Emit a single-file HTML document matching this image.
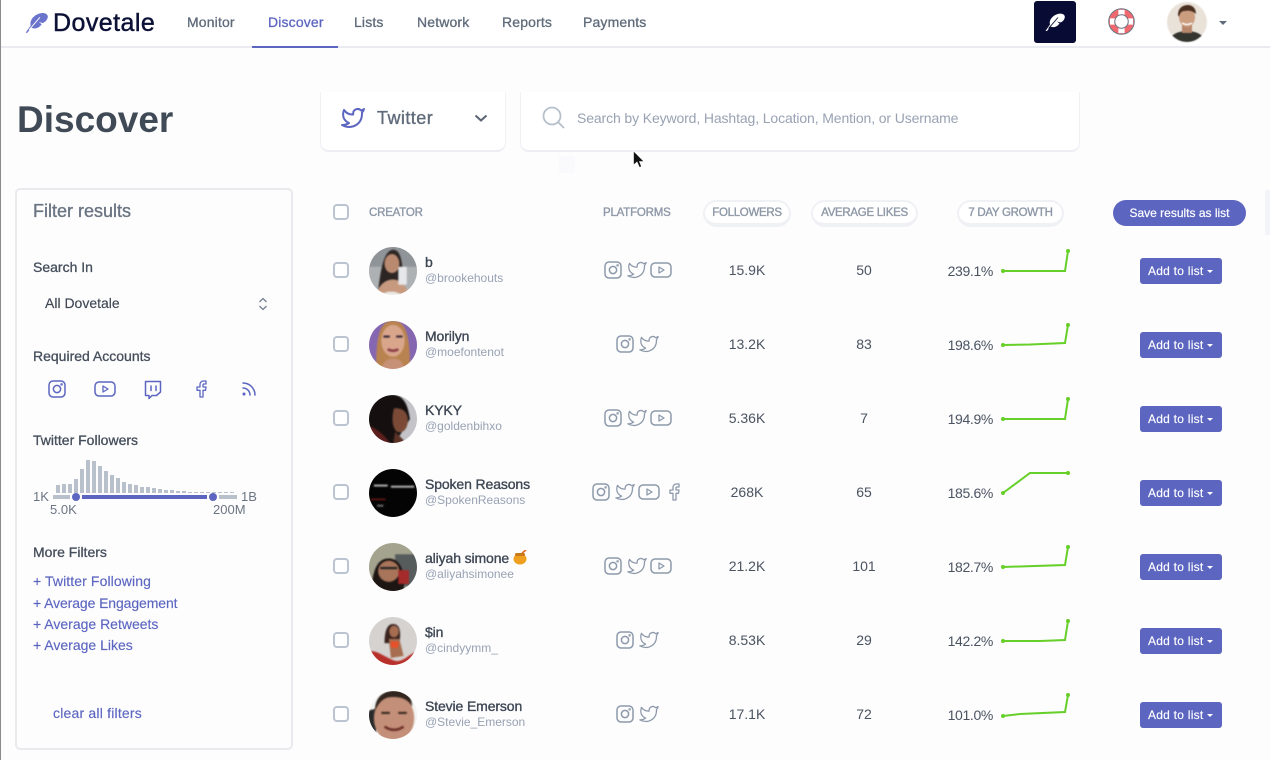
<!DOCTYPE html>
<html lang="en"><head><meta charset="utf-8"><title>Discover</title>
<style>
*{box-sizing:border-box}
html,body{margin:0;padding:0}
body{width:1270px;height:760px;overflow:hidden;background:#fdfdfe;font-family:"Liberation Sans",sans-serif;position:relative}
.a{position:absolute;white-space:nowrap}
.nav{top:14px;line-height:16px;font-size:14px;letter-spacing:.15px;color:#5f6b7a;-webkit-text-stroke:.3px #5f6b7a}
.lab{left:33px;font-size:14px;line-height:16px;color:#454e5b;-webkit-text-stroke:.3px #454e5b}
.lnk{left:33px;font-size:14px;line-height:16px;color:#5c66c0;-webkit-text-stroke:.15px #5c66c0}
.th{top:205px;line-height:16px;font-size:11.5px;letter-spacing:-.2px;color:#8d97a6;-webkit-text-stroke:.35px #8d97a6}
.pill{top:200px;height:27px;background:#fff;border:2px solid #f0f1f4;border-bottom-width:4px;border-radius:14px;text-align:center;line-height:22px;font-size:11.5px;letter-spacing:-.3px;color:#8d97a6;-webkit-text-stroke:.35px #8d97a6}
.row{position:absolute;left:0;width:1270px;height:74px}
.cb{position:absolute;left:333px;top:29px;width:16px;height:16px;border:2px solid #bcc4d2;border-radius:4px;background:#fff}
.hcb{left:333px;top:204px;width:16px;height:16px;border:2px solid #bcc4d2;border-radius:4px;background:#fff}
.av{position:absolute;left:369px;top:14px;width:48px;height:48px;border-radius:50%;overflow:hidden}
.av svg{display:block;filter:blur(.8px);transform:scale(1.06)}
.n{position:absolute;left:425px;top:21px;line-height:16px;font-size:14px;letter-spacing:-.12px;color:#3e4754;-webkit-text-stroke:.35px #3e4754;white-space:nowrap}
.h{position:absolute;left:425px;top:37px;line-height:16px;font-size:12px;color:#98a2b3;white-space:nowrap}
.fo,.li{position:absolute;top:29px;line-height:16px;font-size:14px;color:#4a5360;text-align:center;width:80px}
.fo{left:707px}.li{left:824px}
.gr{position:absolute;left:933px;width:60px;top:30px;line-height:16px;font-size:14px;letter-spacing:-.35px;color:#4a5360;text-align:right}
.sp{position:absolute;left:1000px;top:0}
.btn{position:absolute;left:1140px;top:25px;width:82px;height:26px;background:#5c66c0;border-radius:3px;color:#fff;font-size:12px;letter-spacing:.25px;line-height:26px;padding-left:8px;white-space:nowrap;-webkit-text-stroke:.15px #fff}
.btn i{position:absolute;left:67px;top:12px;width:0;height:0;border:3.5px solid transparent;border-top:3.5px solid #fff;border-bottom:0}
.ic{position:absolute;fill:none;stroke:#8d99aa;stroke-width:1.5;stroke-linecap:round;stroke-linejoin:round}
.bl{stroke:#5c66c0}
.hb{position:absolute;background:#b8c0cb;width:4px;bottom:267px}
</style></head>
<body>
<svg width="0" height="0" style="position:absolute"><defs>
<symbol id="ig" viewBox="0 0 18 18"><rect x="1" y="1" width="16" height="16" rx="4"/><circle cx="9" cy="9" r="3.6"/><circle cx="13.6" cy="4.4" r=".5"/></symbol>
<symbol id="tw" viewBox="0 0 24 24"><path d="M23 3a10.9 10.9 0 0 1-3 1.53 4.48 4.48 0 0 0-7.86 3v1A10.66 10.66 0 0 1 3 4s-4 9 5 13a11.64 11.64 0 0 1-7 2c9 5 20 0 20-11.5a4.5 4.5 0 0 0-.08-.83A7.72 7.72 0 0 0 23 3z"/></symbol>
<symbol id="yt" viewBox="0 0 22 16"><rect x="1" y="1" width="20" height="14" rx="4"/><path d="M9 5l5 3-5 3z" stroke-width="1.3"/></symbol>
<symbol id="fb" viewBox="0 0 12 18"><path d="M11 1H8.600A3.400 3.400 0 0 0 5 4.500V7H2v3.300h3V17h3v-6.700h2.500L11 7H8V4.800c0-.5.300-.8.800-.8H11z" stroke-width="1.300"/></symbol>
<symbol id="th" viewBox="0 0 18 20"><path d="M1.500 1.500h15v10.500l-4 3.500H8l-3 3v-3H1.500z"/><path d="M7 6v4.500M12 6v4.500"/></symbol>
<symbol id="rs" viewBox="0 0 16 16"><path d="M2 7a7 7 0 0 1 7 7M2 2a12 12 0 0 1 12 12"/><circle cx="3" cy="13" r=".8"/></symbol>
<symbol id="fe" viewBox="0 0 20 18"><path d="M.5 18L5 11.500C3.500 6.500 9 1.500 14 .8C17 .3 19.500 1.500 19.800 3.500C20 6 18 8.500 15.500 9.500L12 8.500L14.500 10.500C12 14 8.500 15 5.500 13.500L2 18Z"/></symbol>
</defs></svg>

<div class="a" style="left:0;top:0;width:1px;height:760px;background:#8b8b8b"></div>
<div class="a" style="left:1px;top:0;width:1269px;height:48px;background:#fff;border-bottom:2px solid #e9ebf1"></div>
<div class="a" style="left:252px;top:46px;width:86px;height:2px;background:#5c66c0"></div>

<svg class="a" style="left:25px;top:12px" width="23" height="21" viewBox="0 0 20 18" fill="#6a74cc"><use href="#fe"/><path d="M3.500 15.500L13 4.500" stroke="#fff" stroke-width=".8"/></svg>
<div class="a" style="left:53px;top:8px;line-height:30px;font-size:25px;letter-spacing:.45px;color:#0b1035;-webkit-text-stroke:.45px #0b1035">Dovetale</div>
<div class="a nav" style="left:187px">Monitor</div>
<div class="a nav" style="left:268px;color:#5c66c0;-webkit-text-stroke-color:#5c66c0">Discover</div>
<div class="a nav" style="left:354px">Lists</div>
<div class="a nav" style="left:417px">Network</div>
<div class="a nav" style="left:502px">Reports</div>
<div class="a nav" style="left:583px">Payments</div>

<div class="a" style="left:1034px;top:1px;width:42px;height:42px;background:#080b33;border-radius:3px"></div>
<svg class="a" style="left:1045px;top:13px" width="20" height="18" viewBox="0 0 20 18" fill="#fff"><use href="#fe"/><path d="M3.500 15.500L13 4.500" stroke="#080b33" stroke-width=".9"/></svg>
<svg class="a" style="left:1108px;top:8px" width="27" height="27" viewBox="0 0 28 28"><circle cx="14" cy="14" r="10" fill="none" stroke="#f1696f" stroke-width="6"/><path d="M14 2v8M14 18v8M2 14h8M18 14h8" stroke="#fff" stroke-width="6.500"/><circle cx="14" cy="14" r="13.200" fill="none" stroke="#707883" stroke-width="1.100"/><circle cx="14" cy="14" r="7" fill="none" stroke="#707883" stroke-width="1.100"/></svg>
<svg class="a" style="left:1167px;top:2px;filter:blur(.5px)" width="40" height="40" viewBox="0 0 40 40"><defs><clipPath id="c0"><circle cx="20" cy="20" r="20"/></clipPath></defs><g clip-path="url(#c0)"><rect width="40" height="40" fill="#e9e2d9"/><path d="M2 40C3 32 12 29 20 29S37 32 38 40Z" fill="#34352f"/><rect x="15" y="20" width="10" height="11" fill="#b8876b"/><ellipse cx="20" cy="15" rx="8" ry="10" fill="#cc9e80"/><path d="M11 13C11 5 17 3 21 3S29 6 29 12C26 9 22 8 18 9C15 9 13 10 12 15Z" fill="#4a3020"/><path d="M15 21q5 3 10 0" stroke="#fff" stroke-width="1.500" fill="none"/></g></svg>
<div class="a" style="left:1219px;top:21px;width:0;height:0;border:4px solid transparent;border-top:4px solid #5f6b7a;border-bottom:0"></div>

<div class="a" style="left:17px;top:98px;line-height:44px;font-size:37px;font-weight:bold;color:#3f4a56">Discover</div>

<div class="a" style="left:320px;top:92px;width:186px;height:60px;background:#fff;border:1px solid #f0f1f5;border-top:0;border-bottom:2px solid #eceef3;border-radius:0 0 9px 9px"></div>
<svg class="ic bl" style="left:341px;top:106px;stroke-width:2" width="24" height="24" viewBox="0 0 24 24"><use href="#tw"/></svg>
<div class="a" style="left:377px;top:108px;line-height:20px;font-size:18px;letter-spacing:.45px;color:#5f6b7a;-webkit-text-stroke:.35px #5f6b7a">Twitter</div>
<svg class="a" style="left:474px;top:114px" width="14" height="9" viewBox="0 0 14 9"><path d="M1.500 1.500L7 6.500L12.500 1.500" fill="none" stroke="#5a6472" stroke-width="2"/></svg>

<div class="a" style="left:520px;top:92px;width:560px;height:60px;background:#fff;border:1px solid #f0f1f5;border-top:0;border-bottom:2px solid #eceef3;border-radius:0 0 9px 9px"></div>
<svg class="a" style="left:542px;top:106px" width="23" height="23" viewBox="0 0 23 23"><circle cx="10" cy="10" r="8.500" fill="none" stroke="#b6bfcb" stroke-width="1.800"/><path d="M16 16l6 6" stroke="#b6bfcb" stroke-width="1.800"/></svg>
<div class="a" style="left:577px;top:110px;line-height:16px;font-size:14px;letter-spacing:-.12px;color:#98a2b3">Search by Keyword, Hashtag, Location, Mention, or Username</div>

<div class="a" style="left:559px;top:156px;width:16px;height:17px;background:#fafafd"></div>
<svg class="a" style="left:632px;top:150px" width="13" height="19" viewBox="0 0 13 19"><path d="M1.500 1V15L5 12L7.500 17.500L9.500 16.500L7.500 11.500H12Z" fill="#111" stroke="#fff" stroke-width=".6"/></svg>

<!-- sidebar -->
<div class="a" style="left:15px;top:188px;width:278px;height:562px;border:2px solid #e8eaee;border-radius:5px;background:#fdfdfe"></div>
<div class="a" style="left:33px;top:201px;line-height:20px;font-size:18px;color:#6b7583;-webkit-text-stroke:.35px #6b7583">Filter results</div>
<div class="a lab" style="top:259px">Search In</div>
<div class="a" style="left:45px;top:295px;line-height:16px;font-size:14px;color:#3e4754;-webkit-text-stroke:.15px #3e4754">All Dovetale</div>
<svg class="a" style="left:258px;top:297px" width="10" height="14" viewBox="0 0 10 14"><path d="M1.500 5L5 1.500L8.500 5M1.500 9L5 12.500L8.500 9" fill="none" stroke="#77808d" stroke-width="1.300"/></svg>
<div class="a lab" style="top:348px">Required Accounts</div>
<svg class="ic bl" style="left:48px;top:380px" width="18" height="18"><use href="#ig"/></svg>
<svg class="ic bl" style="left:94px;top:381px" width="22" height="16"><use href="#yt"/></svg>
<svg class="ic bl" style="left:144px;top:380px" width="18" height="20"><use href="#th"/></svg>
<svg class="ic bl" style="left:195px;top:380px" width="12" height="18"><use href="#fb"/></svg>
<svg class="ic bl" style="left:241px;top:381px" width="16" height="16"><use href="#rs"/></svg>
<div class="a lab" style="top:432px">Twitter Followers</div>

<div class="hb" style="left:56px;height:8px"></div><div class="hb" style="left:62px;height:9px"></div><div class="hb" style="left:68px;height:9px"></div><div class="hb" style="left:74px;height:14px"></div><div class="hb" style="left:80px;height:24px"></div><div class="hb" style="left:86px;height:33px"></div><div class="hb" style="left:92px;height:32px"></div><div class="hb" style="left:98px;height:27px"></div><div class="hb" style="left:104px;height:22px"></div><div class="hb" style="left:110px;height:18px"></div><div class="hb" style="left:116px;height:15px"></div><div class="hb" style="left:122px;height:11px"></div><div class="hb" style="left:128px;height:9px"></div><div class="hb" style="left:134px;height:8px"></div><div class="hb" style="left:140px;height:6px"></div><div class="hb" style="left:146px;height:6px"></div><div class="hb" style="left:152px;height:5px"></div><div class="hb" style="left:158px;height:4px"></div><div class="hb" style="left:164px;height:3px"></div><div class="hb" style="left:170px;height:3px"></div><div class="hb" style="left:176px;height:2px"></div><div class="hb" style="left:182px;height:2px"></div><div class="hb" style="left:188px;height:1px"></div><div class="hb" style="left:194px;height:1px"></div><div class="hb" style="left:200px;height:1px"></div><div class="hb" style="left:206px;height:1px"></div><div class="hb" style="left:212px;height:1px"></div><div class="hb" style="left:218px;height:1px"></div><div class="hb" style="left:224px;height:1px"></div><div class="hb" style="left:230px;height:1px"></div>

<div class="a" style="left:53px;top:495px;width:17px;height:4px;background:#b8c0cb"></div>
<div class="a" style="left:82px;top:495px;width:125px;height:4px;background:#5c66c0"></div>
<div class="a" style="left:219px;top:495px;width:18px;height:4px;background:#b8c0cb"></div>
<div class="a" style="left:72px;top:493px;width:8px;height:8px;border-radius:50%;background:#5c66c0"></div>
<div class="a" style="left:209px;top:493px;width:8px;height:8px;border-radius:50%;background:#5c66c0"></div>
<div class="a" style="left:33px;top:489px;line-height:16px;font-size:13px;color:#6b7583">1K</div>
<div class="a" style="left:241px;top:489px;line-height:16px;font-size:13px;color:#6b7583">1B</div>
<div class="a" style="left:50px;top:502px;line-height:16px;font-size:13px;color:#6b7583">5.0K</div>
<div class="a" style="left:213px;top:502px;line-height:16px;font-size:13px;color:#6b7583">200M</div>

<div class="a lab" style="top:544px">More Filters</div>
<div class="a lnk" style="top:573px;letter-spacing:.1px">+ Twitter Following</div>
<div class="a lnk" style="top:595px;letter-spacing:-.1px">+ Average Engagement</div>
<div class="a lnk" style="top:616px">+ Average Retweets</div>
<div class="a lnk" style="top:637px">+ Average Likes</div>
<div class="a lnk" style="left:53px;top:705px;letter-spacing:.2px">clear all filters</div>

<!-- table head -->
<div class="a hcb"></div>
<div class="a th" style="left:369px">CREATOR</div>
<div class="a th" style="left:603px">PLATFORMS</div>
<div class="a pill" style="left:703px;width:88px">FOLLOWERS</div>
<div class="a pill" style="left:811px;width:107px">AVERAGE LIKES</div>
<div class="a pill" style="left:957px;width:107px">7 DAY GROWTH</div>
<div class="a" style="left:1113px;top:200px;width:133px;height:26px;border-radius:13px;background:#5c66c0;color:#fff;font-size:12px;line-height:26px;text-align:center;-webkit-text-stroke:.2px #fff">Save results as list</div>
<div class="a" style="left:1265px;top:190px;width:5px;height:45px;background:#f3f4f7"></div>

<!-- row 1 -->
<div class="row" style="top:233px"><div class="cb"></div>
<div class="av"><svg width="48" height="48" viewBox="0 0 48 48"><rect width="48" height="48" fill="#aeb1b4"/><rect x="0" y="0" width="48" height="20" fill="#8f9498"/><path d="M10 42C12 28 14 5 24 4C33 4 33 20 34 40Z" fill="#2c2523"/><ellipse cx="23" cy="17" rx="7" ry="9" fill="#b98a70"/><path d="M8 48C10 36 18 32 24 32S36 36 40 48Z" fill="#c79a80"/><path d="M12 48C16 42 28 42 34 48Z" fill="#eceae6"/><rect x="29" y="20" width="8" height="17" rx="1" fill="#e6e7ea"/></svg></div>
<div class="n">b</div><div class="h">@brookehouts</div>
<svg class="ic" style="left:604px;top:28px" width="18" height="18"><use href="#ig"/></svg>
<svg class="ic" style="left:627px;top:27px" width="20" height="20" viewBox="0 0 24 24"><use href="#tw"/></svg>
<svg class="ic" style="left:650px;top:29px" width="22" height="16"><use href="#yt"/></svg>
<div class="fo">15.9K</div><div class="li">50</div><div class="gr">239.1%</div>
<svg class="sp" width="75" height="74"><path d="M3 38H65L68 18" fill="none" stroke="#66cf28" stroke-width="2"/><circle cx="3" cy="38" r="2" fill="#66cf28"/><circle cx="68" cy="18" r="2" fill="#66cf28"/></svg>
<div class="btn">Add to list<i></i></div></div>

<!-- row 2 -->
<div class="row" style="top:307px"><div class="cb"></div>
<div class="av"><svg width="48" height="48" viewBox="0 0 48 48"><rect width="48" height="48" fill="#8566b0"/><path d="M8 48C8 20 10 1 24 1S40 20 40 48Z" fill="#b9834f"/><ellipse cx="24" cy="20" rx="11" ry="15" fill="#d9a68c"/><path d="M13 48C14 40 18 37 24 37S34 40 35 48Z" fill="#c79178"/><path d="M15 16h6M27 16h6" stroke="#3a2a35" stroke-width="2"/><path d="M19 28q5 3 10 0" stroke="#8c3d45" stroke-width="2.500" fill="none"/></svg></div>
<div class="n">Morilyn</div><div class="h">@moefontenot</div>
<svg class="ic" style="left:616px;top:28px" width="18" height="18"><use href="#ig"/></svg>
<svg class="ic" style="left:639px;top:27px" width="20" height="20" viewBox="0 0 24 24"><use href="#tw"/></svg>
<div class="fo">13.2K</div><div class="li">83</div><div class="gr">198.6%</div>
<svg class="sp" width="75" height="74"><path d="M3 38L30 37.500L65 36L68 18" fill="none" stroke="#66cf28" stroke-width="2"/><circle cx="3" cy="38" r="2" fill="#66cf28"/><circle cx="68" cy="18" r="2" fill="#66cf28"/></svg>
<div class="btn">Add to list<i></i></div></div>

<!-- row 3 -->
<div class="row" style="top:381px"><div class="cb"></div>
<div class="av"><svg width="48" height="48" viewBox="0 0 48 48"><rect width="48" height="48" fill="#c4c4c8"/><path d="M0 48V14C6 4 14 0 24 1C34 2 38 10 40 24L30 40L38 48Z" fill="#15100f"/><path d="M25 14C32 13 39 17 38 27C37 35 32 38 28 36C24 34 22 24 25 14Z" fill="#7a4a36"/><path d="M0 48V30C6 32 14 36 22 48Z" fill="#5c1f1e"/><path d="M26 36L38 48H24Z" fill="#5b3226"/></svg></div>
<div class="n">KYKY</div><div class="h">@goldenbihxo</div>
<svg class="ic" style="left:604px;top:28px" width="18" height="18"><use href="#ig"/></svg>
<svg class="ic" style="left:627px;top:27px" width="20" height="20" viewBox="0 0 24 24"><use href="#tw"/></svg>
<svg class="ic" style="left:650px;top:29px" width="22" height="16"><use href="#yt"/></svg>
<div class="fo">5.36K</div><div class="li">7</div><div class="gr">194.9%</div>
<svg class="sp" width="75" height="74"><path d="M3 38H65L68 18" fill="none" stroke="#66cf28" stroke-width="2"/><circle cx="3" cy="38" r="2" fill="#66cf28"/><circle cx="68" cy="18" r="2" fill="#66cf28"/></svg>
<div class="btn">Add to list<i></i></div></div>

<!-- row 4 -->
<div class="row" style="top:455px"><div class="cb"></div>
<div class="av"><svg width="48" height="48" viewBox="0 0 48 48"><rect width="48" height="48" fill="#040404"/><path d="M6 17h13M22 18h22" stroke="#a8a8a8" stroke-width="2"/><path d="M3 30h14" stroke="#6a1515" stroke-width="1.500"/><path d="M9 36h6" stroke="#666" stroke-width="2"/></svg></div>
<div class="n">Spoken Reasons</div><div class="h">@SpokenReasons</div>
<svg class="ic" style="left:592px;top:28px" width="18" height="18"><use href="#ig"/></svg>
<svg class="ic" style="left:615px;top:27px" width="20" height="20" viewBox="0 0 24 24"><use href="#tw"/></svg>
<svg class="ic" style="left:638px;top:29px" width="22" height="16"><use href="#yt"/></svg>
<svg class="ic" style="left:668px;top:28px" width="12" height="18"><use href="#fb"/></svg>
<div class="fo">268K</div><div class="li">65</div><div class="gr">185.6%</div>
<svg class="sp" width="75" height="74"><path d="M3 38L30 18H68" fill="none" stroke="#66cf28" stroke-width="2"/><circle cx="3" cy="38" r="2" fill="#66cf28"/><circle cx="68" cy="18" r="2" fill="#66cf28"/></svg>
<div class="btn">Add to list<i></i></div></div>

<!-- row 5 -->
<div class="row" style="top:529px"><div class="cb"></div>
<div class="av"><svg width="48" height="48" viewBox="0 0 48 48"><rect width="48" height="48" fill="#a3a38e"/><rect x="26" y="12" width="22" height="30" fill="#565b5c"/><path d="M4 48C4 26 10 15 21 16S36 30 34 48Z" fill="#1d1512"/><ellipse cx="20" cy="28" rx="10" ry="10" fill="#a8745a"/><path d="M12 25h16" stroke="#222" stroke-width="2"/><rect x="29" y="27" width="10" height="13" fill="#a52a2a"/></svg></div>
<div class="n">aliyah simone <svg width="14" height="15" viewBox="0 0 14 15" style="vertical-align:-2px"><ellipse cx="7" cy="9" rx="6.500" ry="5.500" fill="#f0a020"/><rect x="2" y="3" width="10" height="3" rx="1.500" fill="#c97a18"/><path d="M9 3L13 0" stroke="#e0641c" stroke-width="1.500"/></svg></div><div class="h">@aliyahsimonee</div>
<svg class="ic" style="left:604px;top:28px" width="18" height="18"><use href="#ig"/></svg>
<svg class="ic" style="left:627px;top:27px" width="20" height="20" viewBox="0 0 24 24"><use href="#tw"/></svg>
<svg class="ic" style="left:650px;top:29px" width="22" height="16"><use href="#yt"/></svg>
<div class="fo">21.2K</div><div class="li">101</div><div class="gr">182.7%</div>
<svg class="sp" width="75" height="74"><path d="M3 38L65 36L68 18" fill="none" stroke="#66cf28" stroke-width="2"/><circle cx="3" cy="38" r="2" fill="#66cf28"/><circle cx="68" cy="18" r="2" fill="#66cf28"/></svg>
<div class="btn">Add to list<i></i></div></div>

<!-- row 6 -->
<div class="row" style="top:603px"><div class="cb"></div>
<div class="av"><svg width="48" height="48" viewBox="0 0 48 48"><rect width="48" height="48" fill="#d6d2d0"/><path d="M0 48V34C8 32 14 38 24 42S40 34 48 34V48Z" fill="#b8302a"/><path d="M16 26C16 16 18 8 24 8S32 14 30 26Z" fill="#3a2420"/><ellipse cx="25" cy="15" rx="4.500" ry="5.500" fill="#a66d50"/><path d="M20 22h10L34 38L22 40Z" fill="#a66d50"/><path d="M22 24l8 1-2 6-6-1z" fill="#e8502a"/></svg></div>
<div class="n">$in</div><div class="h">@cindyymm_</div>
<svg class="ic" style="left:616px;top:28px" width="18" height="18"><use href="#ig"/></svg>
<svg class="ic" style="left:639px;top:27px" width="20" height="20" viewBox="0 0 24 24"><use href="#tw"/></svg>
<div class="fo">8.53K</div><div class="li">29</div><div class="gr">142.2%</div>
<svg class="sp" width="75" height="74"><path d="M3 38H40L65 37L68 18" fill="none" stroke="#66cf28" stroke-width="2"/><circle cx="3" cy="38" r="2" fill="#66cf28"/><circle cx="68" cy="18" r="2" fill="#66cf28"/></svg>
<div class="btn">Add to list<i></i></div></div>

<!-- row 7 -->
<div class="row" style="top:677px"><div class="cb"></div>
<div class="av"><svg width="48" height="48" viewBox="0 0 48 48"><rect width="48" height="48" fill="#f4f4f2"/><path d="M0 48V20L8 18V48Z" fill="#2a2a2a"/><ellipse cx="25" cy="27" rx="19" ry="23" fill="#c48f78"/><path d="M7 20C7 6 16 1 26 1S42 6 42 16C38 9 32 7 24 7S12 10 7 20Z" fill="#33261e"/><path d="M13 22h8M29 22h8" stroke="#3a2a20" stroke-width="2"/><path d="M16 35q9 6 18 0" stroke="#70332b" stroke-width="2.500" fill="none"/></svg></div>
<div class="n">Stevie Emerson</div><div class="h">@Stevie_Emerson</div>
<svg class="ic" style="left:616px;top:28px" width="18" height="18"><use href="#ig"/></svg>
<svg class="ic" style="left:639px;top:27px" width="20" height="20" viewBox="0 0 24 24"><use href="#tw"/></svg>
<div class="fo">17.1K</div><div class="li">72</div><div class="gr">101.0%</div>
<svg class="sp" width="75" height="74"><path d="M3 39L20 37L65 35L68 18" fill="none" stroke="#66cf28" stroke-width="2"/><circle cx="3" cy="39" r="2" fill="#66cf28"/><circle cx="68" cy="18" r="2" fill="#66cf28"/></svg>
<div class="btn">Add to list<i></i></div></div>
</body></html>
